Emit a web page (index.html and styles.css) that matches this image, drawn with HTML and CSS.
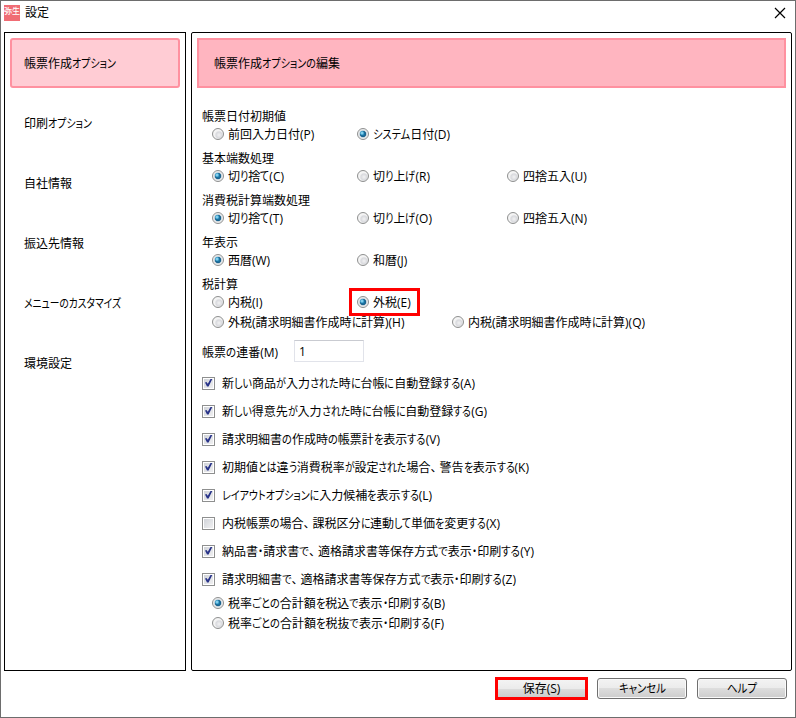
FILE: index.html
```html
<!DOCTYPE html>
<html lang="ja">
<head>
<meta charset="utf-8">
<title>設定</title>
<link rel="stylesheet" href="styles.css">
</head>
<body>
<div class="window">
  <header class="titlebar">
    <span class="logo">弥生</span>
    <h1 class="title">設定</h1>
    <svg class="close" width="12" height="12" viewBox="0 0 12 12"><path d="M1 1L11 11M11 1L1 11" fill="none" stroke="#000" stroke-width="1.2"/></svg>
  </header>
  <main class="body">
    <nav class="nav">
      <a class="nav-item selected"><span data-width="92">帳票作成オプション</span></a>
      <a class="nav-item"><span data-width="68">印刷オプション</span></a>
      <a class="nav-item"><span>自社情報</span></a>
      <a class="nav-item"><span>振込先情報</span></a>
      <a class="nav-item"><span data-width="97">メニューのカスタマイズ</span></a>
      <a class="nav-item"><span>環境設定</span></a>
    </nav>
    <section class="panel">
      <h2 class="band"><span data-width="126">帳票作成オプションの編集</span></h2>
      <div class="form">
        <div class="group">
          <div class="legend">帳票日付初期値</div>
          <div class="row"><label class="opt"><i class="radio"></i><span data-width="86">前回入力日付(P)</span></label><label class="opt"><i class="radio on"></i><span data-width="77">システム日付(D)</span></label></div>
        </div>
        <div class="group">
          <div class="legend">基本端数処理</div>
          <div class="row"><label class="opt"><i class="radio on"></i><span data-width="56">切り捨て(C)</span></label><label class="opt"><i class="radio"></i><span data-width="57">切り上げ(R)</span></label><label class="opt"><i class="radio"></i><span>四捨五入(U)</span></label></div>
        </div>
        <div class="group">
          <div class="legend">消費税計算端数処理</div>
          <div class="row"><label class="opt"><i class="radio on"></i><span data-width="55">切り捨て(T)</span></label><label class="opt"><i class="radio"></i><span data-width="59">切り上げ(O)</span></label><label class="opt"><i class="radio"></i><span>四捨五入(N)</span></label></div>
        </div>
        <div class="group">
          <div class="legend">年表示</div>
          <div class="row"><label class="opt"><i class="radio on"></i><span>西暦(W)</span></label><label class="opt"><i class="radio"></i><span>和暦(J)</span></label></div>
        </div>
        <div class="group tax">
          <div class="legend">税計算</div>
          <div class="row"><label class="opt"><i class="radio"></i><span>内税(I)</span></label><label class="opt marked"><i class="radio on"></i><span>外税(E)</span></label></div>
          <div class="row wide"><label class="opt"><i class="radio"></i><span data-width="176.5">外税(請求明細書作成時に計算)(H)</span></label><label class="opt"><i class="radio"></i><span data-width="177">内税(請求明細書作成時に計算)(Q)</span></label></div>
        </div>
        <div class="serial"><span class="serial-label"><span data-width="76">帳票の連番(M)</span></span><span class="input">1</span></div>
        <div class="checks">
          <label class="check"><i class="box on"></i><span data-width="253">新しい商品が入力された時に台帳に自動登録する(A)</span></label>
          <label class="check"><i class="box on"></i><span data-width="265">新しい得意先が入力された時に台帳に自動登録する(G)</span></label>
          <label class="check"><i class="box on"></i><span data-width="218">請求明細書の作成時の帳票計を表示する(V)</span></label>
          <label class="check"><i class="box on"></i><span data-width="307">初期値とは違う消費税率が設定された場合、警告を表示する(K)</span></label>
          <label class="check"><i class="box on"></i><span data-width="210">レイアウトオプションに入力候補を表示する(L)</span></label>
          <label class="check"><i class="box"></i><span data-width="278">内税帳票の場合、課税区分に連動して単価を変更する(X)</span></label>
          <label class="check"><i class="box on"></i><span data-width="312">納品書・請求書で、適格請求書等保存方式で表示・印刷する(Y)</span></label>
          <label class="check"><i class="box on"></i><span data-width="294">請求明細書で、適格請求書等保存方式で表示・印刷する(Z)</span></label>
        </div>
        <div class="subs">
          <div class="row sub"><label class="opt"><i class="radio on"></i><span data-width="217">税率ごとの合計額を税込で表示・印刷する(B)</span></label></div>
          <div class="row sub"><label class="opt"><i class="radio"></i><span data-width="216">税率ごとの合計額を税抜で表示・印刷する(F)</span></label></div>
        </div>
      </div>
    </section>
  </main>
  <footer class="footer">
    <button class="btn save">保存(S)</button>
    <button class="btn"><span data-width="47">キャンセル</span></button>
    <button class="btn"><span data-width="30">ヘルプ</span></button>
  </footer>
</div>
<script src="kana.js"></script>
</body>
</html>
```
FILE: kana.js
```js
// Condense the kana of each label so that it takes its UI width, while kanji keep a full em.
document.querySelectorAll('[data-width]').forEach(function (label) {
  label.innerHTML = label.textContent
    .replace(/[\u3040-\u30ff]+/g, '<span class="kana">$&</span>')
    .replace(/\u3001/g, '<span class="comma">$&</span>');
  var runs = Array.from(label.querySelectorAll('.kana'));
  var widths = runs.map(function (run) { return run.getBoundingClientRect().width; });
  var kana = widths.reduce(function (a, b) { return a + b; }, 0);
  if (!kana) return;
  var scale = (Number(label.dataset.width) - label.getBoundingClientRect().width + kana) / kana;
  runs.forEach(function (run, i) {
    run.style.width = (widths[i] * scale).toFixed(2) + 'px';
    run.style.transform = 'scaleX(' + scale.toFixed(4) + ')';
  });
});
```
FILE: styles.css
```css
* { box-sizing: border-box; }
body {
  margin: 0;
  background: #fff;
  color: #000;
  font: 12px/18px "Open Sans", "Noto Sans CJK JP", sans-serif;
}
h1, h2 { margin: 0; font-size: 12px; font-weight: 400; }
span { white-space: nowrap; }
.kana { display: inline-block; font-feature-settings: "palt"; transform-origin: 0 50%; }
.comma { margin-right: 3px; font-feature-settings: "halt"; }

.window {
  display: flex;
  flex-direction: column;
  width: 796px;
  height: 718px;
  border: 1px solid #6d6d6d;
}
.titlebar {
  display: flex;
  flex: none;
  height: 31px;
  padding: 4px 9px 0 3px;
}
.logo {
  width: 16px;
  height: 16px;
  background: #f06c74;
  color: #fff;
  font-size: 8px;
  font-weight: 500;
  line-height: 11px;
}
.title { margin-left: 5px; line-height: 16px; }
.close { margin: 2px 0 0 auto; }

.body {
  display: flex;
  flex: none;
  gap: 5px;
  height: 639px;
  padding: 0 3px;
}
.nav {
  display: flex;
  flex-direction: column;
  gap: 10px;
  width: 182px;
  padding: 5px;
  border: 1px solid #000;
}
.nav-item {
  display: flex;
  align-items: center;
  height: 50px;
  padding: 2px 0 0 12px;
  border: 2px solid transparent;
  border-radius: 3px;
}
.nav-item.selected { border-color: #ff91a0; background: #ffccd4; }
.panel {
  width: 601px;
  padding: 5px;
  border: 1px solid #000;
  border-radius: 2px;
}
.band {
  display: flex;
  align-items: center;
  height: 50px;
  padding: 2px 0 0 15px;
  border: 2px solid #ff91a0;
  background: #ffb5c0;
}
.form { padding: 19px 0 0 5px; }
.group { height: 42px; }
.group.tax { height: 57px; }
.legend { height: 18px; padding-top: 1px; }
.row {
  display: grid;
  grid-template-columns: 145px 150px auto;
  height: 18px;
  padding-left: 10px;
}
.row.wide { grid-template-columns: 240px auto; height: 20px; padding-top: 2px; }
.opt { display: flex; align-items: center; gap: 4px; height: 18px; }
.opt > span { padding-top: 2px; }
.opt.marked {
  width: 71px;
  height: 28px;
  margin: -5px 0 -5px -8px;
  padding-left: 5px;
  border: 3px solid #f00;
}
.radio {
  flex: none;
  width: 12px;
  height: 12px;
  border: 1px solid #8e8f8f;
  border-radius: 50%;
  background: radial-gradient(circle at 60% 60%, #f2f2f3 0, #d9dade 3px, #f4f4f4 4.5px);
}
.radio.on {
  background: radial-gradient(circle at 4px 4px, #b5e8fa 0, #55b4dc 1.4px, transparent 2.4px), radial-gradient(circle, #2488b8 0, #17608c 2.8px, #d4dbe0 3.6px, #f4f4f4 5px);
}
.serial { display: flex; align-items: center; height: 22px; margin-top: 8px; }
.serial-label { width: 92px; padding-top: 4px; }
.input {
  width: 70px;
  height: 22px;
  padding-left: 4px;
  border: 1px solid #e1e3ea;
  border-top-color: #c9cbd1;
  line-height: 21px;
}
.checks { margin-top: 7px; }
.check { display: flex; align-items: center; gap: 7px; height: 28px; }
.check > span { padding-top: 2px; }
.subs { padding-top: 1px; }
.box {
  position: relative;
  flex: none;
  width: 13px;
  height: 13px;
  border: 1px solid #8e8f8f;
  background: linear-gradient(135deg, #cdd0d6, #f3f3f4);
  background-clip: content-box;
  padding: 1px;
}
.box.on::after {
  content: "";
  position: absolute;
  inset: 0;
  background: #293489;
  clip-path: polygon(2px 5px, 3.5px 4.5px, 4.8px 6.3px, 7.5px 1.5px, 9.3px 1.5px, 5.6px 9px, 4px 9px);
}
.row.sub { height: 20px; }
.footer {
  display: flex;
  justify-content: flex-end;
  gap: 10px;
  padding: 7px 8px 0 0;
}
.btn {
  width: 90px;
  height: 21px;
  padding: 0;
  border: 1px solid #707070;
  border-radius: 3px;
  background: linear-gradient(#f3f3f3 0, #ebebeb 50%, #dddddd 50%, #cdcdcd 100%);
  box-shadow: inset 0 0 0 1px #fafafa;
  color: #000;
  font: inherit;
  line-height: 18px;
}
.btn.save {
  width: 93px;
  height: 23px;
  margin: -1px -1px 0 0;
  border: 3px solid #f00;
  border-radius: 0;
  box-shadow: none;
  line-height: 17px;
}
```
